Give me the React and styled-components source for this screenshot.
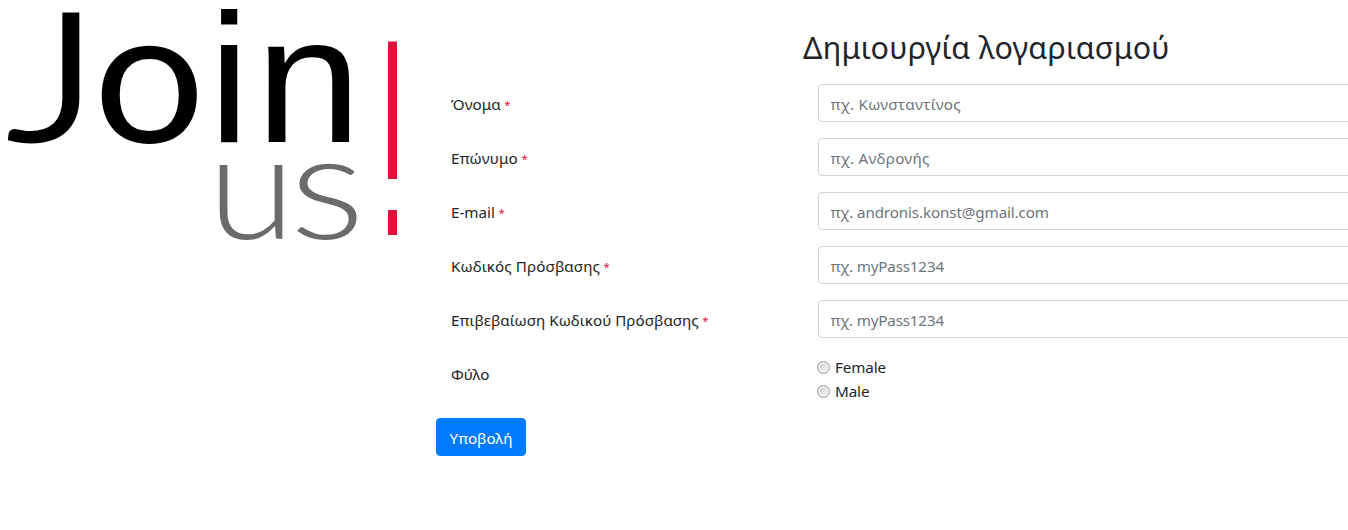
import React from "react";
import styled, { createGlobalStyle } from "styled-components";

const GlobalStyle = createGlobalStyle`
  *, *::before, *::after { box-sizing: border-box; }
  html, body { margin: 0; background: #fff; overflow: hidden; }
  body {
    font-family: "Noto Sans", "Open Sans", sans-serif;
    font-size: 15.2px;
    line-height: 24px;
    color: #212529;
  }
`;

const Page = styled.main`
  display: flex;
  align-items: flex-start;
  width: 1348px;
  height: 530px;
  overflow: hidden;
`;

const Brand = styled.div`
  flex: 0 0 436px;
  height: 250px;
  svg { display: block; overflow: visible; }
`;

const Form = styled.form`
  flex: 0 0 1101px;
  padding-top: 28px;
`;

const Title = styled.h2`
  margin: 0 0 17px 367px;
  height: 39px;
  font-size: 30.4px;
  line-height: 39px;
  font-weight: 400;
  white-space: nowrap;
  letter-spacing: 0.29px;
`;

const Row = styled.div`
  display: flex;
  height: 38px;
  margin-bottom: 16px;
`;

const Label = styled.label`
  flex: 0 0 367px;
  padding: 8px 15px 0;
  white-space: nowrap;
`;

const Tracked = styled.span`
  letter-spacing: ${(p) => p.$track || 0}px;
`;

const Star = styled.span`
  color: #dc143c;
  font-size: 11.5px;
  line-height: 1;
  margin-left: 3.5px;
  vertical-align: 1px;
`;

const Field = styled.div`
  flex: 1;
  padding: 0 15px;
`;

const Input = styled.input`
  display: block;
  width: 100%;
  height: 38px;
  padding: 8px 12px 6px 11.5px;
  border: 1px solid #ced4da;
  border-radius: 4px;
  background: #fff;
  font: inherit;
  letter-spacing: ${(p) => p.$track || 0}px;
  &::placeholder { color: #6c757d; opacity: 1; }
`;

const Choices = styled.div`
  flex: 1;
  padding: 1px 14px 0;
`;

const Choice = styled.label`
  display: flex;
  align-items: center;
  height: 24px;
  gap: 5px;
  letter-spacing: -0.1px;
`;

const Radio = styled.input.attrs({ type: "radio" })`
  appearance: none;
  width: 13px;
  height: 13px;
  margin: 0;
  border: 1px solid #9b9b9b;
  border-radius: 50%;
  background: linear-gradient(135deg, #b9bcc0, #f4f4f4 75%);
  box-shadow: inset 0 0 0 2px #ededed;
`;

const Submit = styled.button`
  display: block;
  width: 90px;
  height: 38px;
  margin-top: 26px;
  padding: 2px 0 0;
  border: 1px solid #007bff;
  border-radius: 4px;
  background: #007bff;
  color: #fff;
  font: inherit;
`;

const fields = [
  { label: "Όνομα", hint: "πχ. Κωνσταντίνος", labelTrack: 0.1, hintTrack: 0.27 },
  { label: "Επώνυμο", hint: "πχ. Ανδρονής", labelTrack: 0.2, hintTrack: 0.28 },
  { label: "E-mail", hint: "πχ. andronis.konst@gmail.com", hintTrack: -0.12 },
  { label: "Κωδικός Πρόσβασης", hint: "πχ. myPass1234", labelTrack: 0.09, hintTrack: -0.18 },
  { label: "Επιβεβαίωση Κωδικού Πρόσβασης", hint: "πχ. myPass1234", labelTrack: 0.02, hintTrack: -0.18 },
];

const HeavyJ = styled.text`
  font-family: Lato, sans-serif;
  font-size: 120px;
  font-weight: 300;
  stroke: #000;
  stroke-width: 5.5px;
  vector-effect: non-scaling-stroke;
`;

function Logo() {
  return (
    <svg width="436" height="250" viewBox="0 0 436 250" role="img" aria-label="Join us!">
      <HeavyJ transform="translate(8.3 140.2) scale(1.79 1.46)">J</HeavyJ>
      <text fontFamily="Lato, sans-serif" fontSize="120" transform="translate(93.5 142.5) scale(1.64 1.57)">o</text>
      <g fontFamily="Liberation Sans, sans-serif" fontSize="184">
        <text x="208.7" y="142">i</text>
        <text transform="translate(255.5 142) scale(1.035 .975)">n</text>
      </g>
      <g fontFamily="Lato, sans-serif" fontSize="148" fontWeight="300" fill="#6b6b6b">
        <text transform="translate(207.5 238.5) scale(1.08 1)">u</text>
        <text transform="translate(289.6 238.5) scale(1.2 1)">s</text>
      </g>
      <rect x="388" y="41.5" width="9" height="137.5" fill="#dc143c" />
      <rect x="388" y="210" width="9" height="25" fill="#dc143c" />
    </svg>
  );
}

export default function App() {
  return (
    <>
      <GlobalStyle />
      <Page>
        <Brand><Logo /></Brand>
        <Form>
          <Title>Δημιουργία λογαριασμού</Title>
          {fields.map((f) => (
            <Row key={f.label}>
              <Label><Tracked $track={f.labelTrack}>{f.label}</Tracked><Star>*</Star></Label>
              <Field><Input placeholder={f.hint} $track={f.hintTrack} /></Field>
            </Row>
          ))}
          <Row>
            <Label as="div">Φύλο</Label>
            <Choices>
              <Choice><Radio name="gender" />Female</Choice>
              <Choice><Radio name="gender" />Male</Choice>
            </Choices>
          </Row>
          <Submit type="button">Υποβολή</Submit>
        </Form>
      </Page>
    </>
  );
}
